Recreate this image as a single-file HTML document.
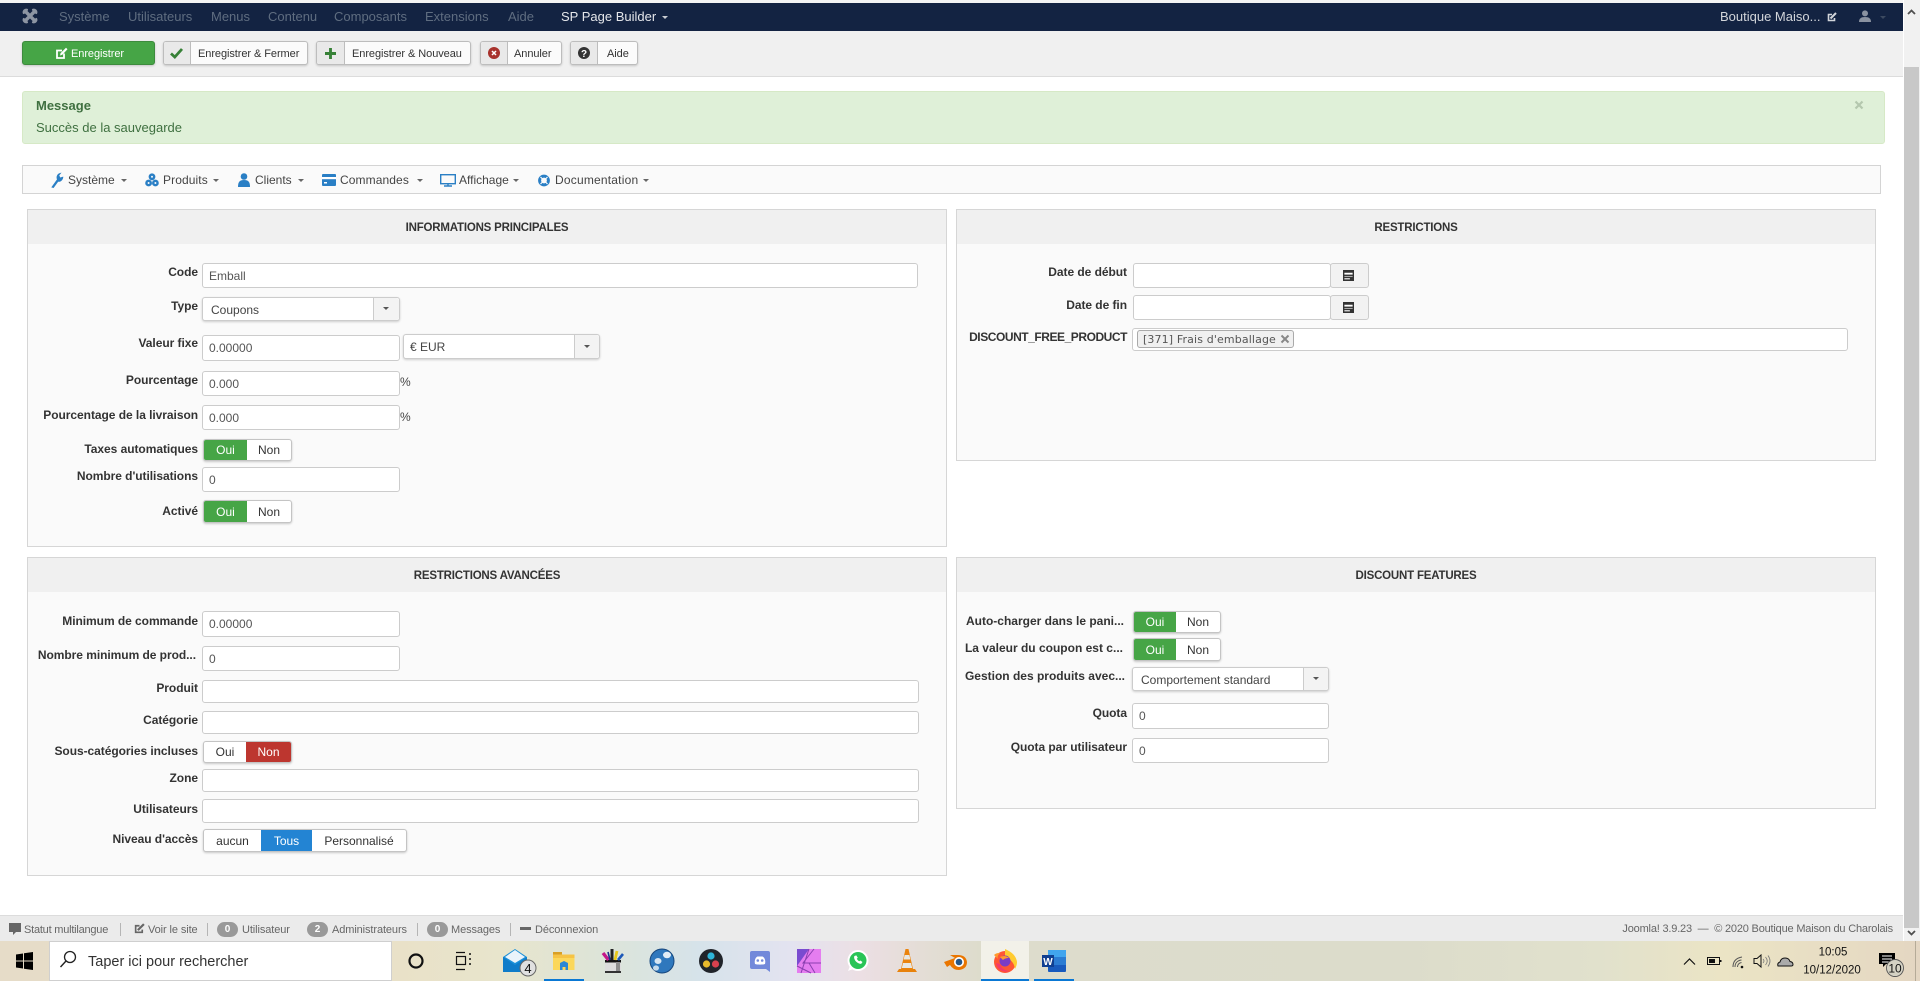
<!DOCTYPE html>
<html lang="fr"><head><meta charset="utf-8"><title>Joomla</title>
<style>
html,body{margin:0;padding:0;width:1920px;height:981px;overflow:hidden;background:#fff;font-family:"Liberation Sans",Arial,sans-serif;color:#333}
.a,.t,.lb,.in,.pn,.bt,.tg{position:absolute;box-sizing:border-box}
.t{white-space:nowrap;line-height:14px;height:14px}
.nv{font-size:13px;color:#5f6d80;top:10px}
.lb{font-weight:bold;font-size:12px;line-height:14px;white-space:nowrap;text-align:right;color:#333;letter-spacing:-.05px}
.in{background:#fff;border:1px solid #ccc;border-radius:3px;font-size:12px;color:#555;padding-left:6px;display:flex;align-items:center}
.sel{box-shadow:0 1px 2px rgba(0,0,0,.18);color:#444}
.ar{position:absolute;right:0;top:0;bottom:0;background:#f3f3f3;border-left:1px solid #ccc;border-radius:0 3px 3px 0}
.ar:after{content:"";position:absolute;left:50%;top:50%;margin:-2px 0 0 -3.5px;border:3.5px solid transparent;border-top-color:#555;border-bottom:0}
.pn{border:1px solid #d6d6d6;background:#fafafa}
.ph{position:absolute;left:0;right:0;top:0;height:34px;background:#f0f0f0;text-align:center;font-weight:bold;font-size:11.5px;letter-spacing:-.2px;line-height:37px;color:#333}
.bt{background:#fbfbfb;border:1px solid #bdbdbd;border-radius:3px;box-shadow:0 1px 2px rgba(0,0,0,.18);height:24px;top:41px}
.bic{position:absolute;left:0;top:0;bottom:0;background:#e9e9e9;border-right:1px solid #bdbdbd;border-radius:2px 0 0 2px}
.bt span{position:absolute;top:5px;font-size:11px;line-height:14px;color:#333;white-space:nowrap;letter-spacing:-.07px}
.tg{border:1px solid #c4c4c4;border-radius:3px;background:#fff;box-shadow:0 1px 2px rgba(0,0,0,.2);font-size:12px;color:#333;overflow:hidden}
.tg b{position:absolute;top:0;bottom:0;font-weight:normal;text-align:center;display:flex;align-items:center;justify-content:center}
.g{background:#46a546;color:#fff}.r{background:#bd362f;color:#fff}.bl{background:#2384d3;color:#fff}
.m{font-size:12px;color:#444;top:172.5px}
.c{position:absolute;top:179px;border:3px solid transparent;border-top-color:#666;border-bottom:0}
.f{font-size:11px;color:#666;top:923px;letter-spacing:-.1px}
.d{position:absolute;top:923px;width:1px;height:13px;background:#b5b5b5}
.bd{position:absolute;top:922px;width:21px;height:15px;border-radius:8px;background:#999;color:#fff;font-size:10px;font-weight:bold;line-height:15px;text-align:center}
svg{position:absolute;overflow:visible}
</style></head><body>

<!-- navbar -->
<div class="a" style="left:0;top:0;width:1920px;height:3px;background:#f4f4f4"></div>
<div class="a" style="left:0;top:3px;width:1903px;height:28px;background:#132342"></div>
<svg style="left:22px;top:8px" width="16" height="16" viewBox="0 0 16 16"><g fill="none" stroke="#8d95a3" stroke-width="3.4" stroke-linecap="round"><path d="M3 3L13 13M13 3L3 13"/><path d="M5 1.8A2.6 2.6 0 0 0 1.8 5M14.2 5A2.6 2.6 0 0 0 11 1.8M1.8 11A2.6 2.6 0 0 0 5 14.2M11 14.2A2.6 2.6 0 0 0 14.2 11" stroke-width="2.2"/></g></svg>
<div class="t nv" style="left:59px">Système</div>
<div class="t nv" style="left:128px">Utilisateurs</div>
<div class="t nv" style="left:211px">Menus</div>
<div class="t nv" style="left:268px">Contenu</div>
<div class="t nv" style="left:334px">Composants</div>
<div class="t nv" style="left:425px">Extensions</div>
<div class="t nv" style="left:508px">Aide</div>
<div class="t nv" style="left:561px;color:#e4e6ea">SP Page Builder</div>
<div class="a" style="left:662px;top:16px;border:3px solid transparent;border-top-color:#c8ccd2;border-bottom:0"></div>
<div class="t nv" style="left:1720px;color:#d2d5da">Boutique Maiso...</div>
<svg style="left:1827px;top:12px" width="10" height="10" viewBox="0 0 10 10"><path d="M7.5 6v2.5h-6v-6H5" fill="none" stroke="#d2d5da" stroke-width="1.6"/><path d="M3.5 6.5L9 1" stroke="#d2d5da" stroke-width="2"/></svg>
<svg style="left:1859px;top:10px" width="12" height="12" viewBox="0 0 12 12" fill="#8a92a0"><circle cx="6" cy="3.4" r="3"/><path d="M0 12c0-3.5 2-5 6-5s6 1.500 6 5z"/></svg>
<div class="a" style="left:1880px;top:16px;border:3px solid transparent;border-top-color:#3c4a60;border-bottom:0"></div>

<!-- toolbar -->
<div class="a" style="left:0;top:31px;width:1903px;height:46px;background:#f0f0f0;border-bottom:1px solid #dcdcdc;box-sizing:border-box"></div>
<div class="bt" style="left:22px;width:133px;background:#46a546;border-color:#3d8b3d">
<svg style="left:32px;top:5px" width="13" height="13" viewBox="0 0 13 13"><path d="M9 6.500v4.500H2V3.500h5" fill="none" stroke="#fff" stroke-width="1.800"/><path d="M5 8.500l.6-2.400L11 .8l1.500 1.500L7.300 7.800z" fill="#fff"/></svg>
<span style="left:48px;color:#fff">Enregistrer</span></div>
<div class="bt" style="left:163px;width:145px"><div class="bic" style="width:26px"></div>
<svg style="left:6px;top:5px" width="13" height="12" viewBox="0 0 13 12"><path d="M1 6.500L4.800 10 12 2" fill="none" stroke="#378137" stroke-width="2.800"/></svg>
<span style="left:34px">Enregistrer &amp; Fermer</span></div>
<div class="bt" style="left:316px;width:155px"><div class="bic" style="width:27px"></div>
<svg style="left:8px;top:6px" width="11" height="11" viewBox="0 0 13 13"><path d="M6.500 0v13M0 6.500h13" stroke="#378137" stroke-width="3.400"/></svg>
<span style="left:35px">Enregistrer &amp; Nouveau</span></div>
<div class="bt" style="left:480px;width:82px"><div class="bic" style="width:26px"></div>
<svg style="left:7px;top:4px" width="12" height="14" viewBox="0 0 12 14"><circle cx="6" cy="7" r="6" fill="#a8322c"/><path d="M4 5l4 4M8 5l-4 4" stroke="#fff" stroke-width="1.500"/></svg>
<span style="left:33px">Annuler</span></div>
<div class="bt" style="left:570px;width:68px"><div class="bic" style="width:26px"></div>
<svg style="left:7px;top:4px" width="12" height="14" viewBox="0 0 12 14"><circle cx="6" cy="7" r="6" fill="#333"/><text x="6" y="11" font-size="10" font-weight="bold" fill="#fff" text-anchor="middle" font-family="Liberation Sans">?</text></svg>
<span style="left:36px">Aide</span></div>

<!-- message -->
<div class="a" style="left:22px;top:91px;width:1863px;height:53px;background:#dff0d8;border:1px solid #d6e9c6;border-radius:3px;box-sizing:border-box"></div>
<div class="t" style="left:36px;top:99px;font-size:13px;font-weight:bold;color:#3f7040">Message</div>
<div class="t" style="left:36px;top:121px;font-size:13px;color:#3f7040">Succès de la sauvegarde</div>
<svg style="left:1855px;top:101px" width="8" height="8" viewBox="0 0 8 8"><path d="M.5.500l7 7M7.500.500l-7 7" stroke="#b4c7ae" stroke-width="2.200"/></svg>

<!-- submenu -->
<div class="a" style="left:22px;top:165px;width:1859px;height:29px;background:#fafafa;border:1px solid #d4d4d4;box-sizing:border-box"></div>
<svg style="left:50px;top:172px" width="14" height="16" viewBox="0 0 12 14"><path d="M1 13.500L6 6.500C5 4 6 1 10 .5L8 3l.8 1.800L11.500 4c0 3-2.500 5-4.500 4.500L3 14z" fill="#2a7fc5"/></svg>
<div class="t m" style="left:68px">Système</div><div class="c" style="left:121px"></div>
<svg style="left:145px;top:173px" width="14" height="14" viewBox="0 0 14 14" fill="#2a7fc5"><circle cx="7" cy="3.800" r="3.400"/><circle cx="3.600" cy="10" r="3.400"/><circle cx="10.400" cy="10" r="3.400"/><g fill="#fafafa"><circle cx="7" cy="3.800" r="1"/><circle cx="3.600" cy="10" r="1"/><circle cx="10.400" cy="10" r="1"/></g></svg>
<div class="t m" style="left:163px;letter-spacing:.1px">Produits</div><div class="c" style="left:213px"></div>
<svg style="left:238px;top:173px" width="12" height="14" viewBox="0 0 12 14" fill="#2a7fc5"><circle cx="6" cy="3.500" r="3.300"/><path d="M0 14c0-5 1.500-7 6-7s6 2 6 7z"/></svg>
<div class="t m" style="left:255px">Clients</div><div class="c" style="left:298px"></div>
<svg style="left:322px;top:174px" width="14" height="12" viewBox="0 0 14 12"><rect width="14" height="12" rx="1" fill="#2a7fc5"/><rect y="3" width="14" height="2.200" fill="#fff"/><rect x="2" y="8" width="3" height="1.500" fill="#fff"/></svg>
<div class="t m" style="left:340px;letter-spacing:.1px">Commandes</div><div class="c" style="left:417px"></div>
<svg style="left:440px;top:174px" width="16" height="13" viewBox="0 0 16 13"><rect x=".7" y=".7" width="14.600" height="9" fill="none" stroke="#2a7fc5" stroke-width="1.400"/><path d="M4 12h8M8 10v2" stroke="#2a7fc5" stroke-width="1.400"/></svg>
<div class="t m" style="left:459px">Affichage</div><div class="c" style="left:513px"></div>
<svg style="left:538px;top:174px" width="12" height="13" viewBox="0 0 12 12"><circle cx="6" cy="6" r="4.400" fill="none" stroke="#2a7fc5" stroke-width="3"/><path d="M2.500 2.500L4.500 4.500M9.500 2.500L7.500 4.500M2.500 9.500L4.500 7.500M9.500 9.500L7.500 7.500" stroke="#fafafa" stroke-width="1.200"/></svg>
<div class="t m" style="left:555px;letter-spacing:.2px">Documentation</div><div class="c" style="left:643px"></div>

<!-- panels -->
<div class="pn" style="left:27px;top:209px;width:920px;height:338px"><div class="ph">INFORMATIONS PRINCIPALES</div></div>
<div class="pn" style="left:956px;top:209px;width:920px;height:252px"><div class="ph">RESTRICTIONS</div></div>
<div class="pn" style="left:27px;top:557px;width:920px;height:319px"><div class="ph">RESTRICTIONS AVANCÉES</div></div>
<div class="pn" style="left:956px;top:557px;width:920px;height:252px"><div class="ph">DISCOUNT FEATURES</div></div>

<!-- panel 1 -->
<div class="lb" style="right:1722px;top:265px">Code</div>
<div class="in" style="left:202px;top:263px;width:716px;height:25px">Emball</div>
<div class="lb" style="right:1722px;top:299px">Type</div>
<div class="in sel" style="left:202px;top:297px;width:198px;height:24px;padding-left:8px;padding-top:1px">Coupons<div class="ar" style="width:25px"></div></div>
<div class="lb" style="right:1722px;top:336px">Valeur fixe</div>
<div class="in" style="left:202px;top:335px;width:198px;height:26px">0.00000</div>
<div class="in sel" style="left:403px;top:334px;width:197px;height:25px">€ EUR<div class="ar" style="width:24px"></div></div>
<div class="lb" style="right:1722px;top:373px">Pourcentage</div>
<div class="in" style="left:202px;top:371px;width:198px;height:25px">0.000</div>
<div class="t" style="left:400px;top:375px;font-size:12px;color:#444">%</div>
<div class="lb" style="right:1722px;top:408px">Pourcentage de la livraison</div>
<div class="in" style="left:202px;top:405px;width:198px;height:25px">0.000</div>
<div class="t" style="left:400px;top:410px;font-size:12px;color:#444">%</div>
<div class="lb" style="right:1722px;top:442px">Taxes automatiques</div>
<div class="tg" style="left:203px;top:439px;width:89px;height:22px"><b class="g" style="left:0;width:43px">Oui</b><b style="left:43px;width:44px">Non</b></div>
<div class="lb" style="right:1722px;top:469px">Nombre d'utilisations</div>
<div class="in" style="left:202px;top:467px;width:198px;height:25px">0</div>
<div class="lb" style="right:1722px;top:504px">Activé</div>
<div class="tg" style="left:203px;top:500px;width:89px;height:23px"><b class="g" style="left:0;width:43px">Oui</b><b style="left:43px;width:44px">Non</b></div>

<!-- panel 2 -->
<div class="lb" style="right:793px;top:265px">Date de début</div>
<div class="in" style="left:1133px;top:263px;width:198px;height:25px"></div>
<div class="in" style="left:1330px;top:263px;width:39px;height:25px;background:#f2f2f2"></div>
<div class="lb" style="right:793px;top:298px">Date de fin</div>
<div class="in" style="left:1133px;top:295px;width:198px;height:25px"></div>
<div class="in" style="left:1330px;top:295px;width:39px;height:25px;background:#f2f2f2"></div>
<svg style="left:1343px;top:270px" width="11" height="11" viewBox="0 0 12 12"><rect width="12" height="12" fill="#333"/><rect x="1.500" y="3" width="9" height="2" fill="#fff"/><rect x="1.500" y="6.500" width="9" height="1" fill="#bbb"/><rect x="1.500" y="9" width="6" height="1.200" fill="#fff"/></svg>
<svg style="left:1343px;top:302px" width="11" height="11" viewBox="0 0 12 12"><rect width="12" height="12" fill="#333"/><rect x="1.500" y="3" width="9" height="2" fill="#fff"/><rect x="1.500" y="6.500" width="9" height="1" fill="#bbb"/><rect x="1.500" y="9" width="6" height="1.200" fill="#fff"/></svg>
<div class="lb" style="right:793px;top:330px;letter-spacing:-.45px">DISCOUNT_FREE_PRODUCT</div>
<div class="in" style="left:1132px;top:328px;width:716px;height:23px"></div>
<div class="a" style="left:1137px;top:330px;width:157px;height:18px;background:#f0f0f0;border:1px solid #aaa;border-radius:3px;box-sizing:border-box"></div>
<div class="t" style="left:1143px;top:333px;font-family:'DejaVu Sans',sans-serif;font-size:11px;letter-spacing:.13px;color:#555">[371] Frais d'emballage</div>
<svg style="left:1281px;top:335px" width="8" height="8" viewBox="0 0 8 8"><path d="M.5.500l7 7M7.500.500l-7 7" stroke="#888" stroke-width="2"/></svg>

<!-- panel 3 -->
<div class="lb" style="right:1722px;top:614px">Minimum de commande</div>
<div class="in" style="left:202px;top:611px;width:198px;height:26px">0.00000</div>
<div class="lb" style="right:1724px;top:648px">Nombre minimum de prod...</div>
<div class="in" style="left:202px;top:646px;width:198px;height:25px">0</div>
<div class="lb" style="right:1722px;top:681px">Produit</div>
<div class="in" style="left:202px;top:680px;width:717px;height:23px"></div>
<div class="lb" style="right:1722px;top:713px">Catégorie</div>
<div class="in" style="left:202px;top:711px;width:717px;height:23px"></div>
<div class="lb" style="right:1722px;top:744px">Sous-catégories incluses</div>
<div class="tg" style="left:203px;top:741px;width:89px;height:22px"><b style="left:0;width:42px">Oui</b><b class="r" style="left:42px;width:45px">Non</b></div>
<div class="lb" style="right:1722px;top:771px">Zone</div>
<div class="in" style="left:202px;top:769px;width:717px;height:23px"></div>
<div class="lb" style="right:1722px;top:802px">Utilisateurs</div>
<div class="in" style="left:202px;top:799px;width:717px;height:24px"></div>
<div class="lb" style="right:1722px;top:832px">Niveau d'accès</div>
<div class="tg" style="left:203px;top:829px;width:204px;height:23px"><b style="left:0;width:57px">aucun</b><b class="bl" style="left:57px;width:51px">Tous</b><b style="left:108px;width:94px">Personnalisé</b></div>

<!-- panel 4 -->
<div class="lb" style="right:796px;top:614px;letter-spacing:0">Auto-charger dans le pani...</div>
<div class="tg" style="left:1133px;top:611px;width:88px;height:22px"><b class="g" style="left:0;width:42px">Oui</b><b style="left:42px;width:44px">Non</b></div>
<div class="lb" style="right:797px;top:641px;letter-spacing:0">La valeur du coupon est c...</div>
<div class="tg" style="left:1133px;top:638px;width:88px;height:23px"><b class="g" style="left:0;width:42px">Oui</b><b style="left:42px;width:44px">Non</b></div>
<div class="lb" style="right:795px;top:669px;letter-spacing:0">Gestion des produits avec...</div>
<div class="in sel" style="left:1132px;top:667px;width:197px;height:24px;padding-left:8px;padding-top:1px">Comportement standard<div class="ar" style="width:24px"></div></div>
<div class="lb" style="right:793px;top:706px">Quota</div>
<div class="in" style="left:1132px;top:703px;width:197px;height:26px">0</div>
<div class="lb" style="right:793px;top:740px">Quota par utilisateur</div>
<div class="in" style="left:1132px;top:738px;width:197px;height:25px">0</div>

<!-- scrollbar -->
<div class="a" style="left:1903px;top:0;width:17px;height:941px;background:#f1f1f1;border-left:1px solid #fff;box-sizing:border-box"></div>
<div class="a" style="left:1904px;top:67px;width:15px;height:861px;background:#c8c8c8"></div>
<svg style="left:1907px;top:9px" width="9" height="6" viewBox="0 0 9 6"><path d="M1 5l3.500-3.500L8 5" fill="none" stroke="#505050" stroke-width="1.800"/></svg>
<svg style="left:1907px;top:930px" width="9" height="6" viewBox="0 0 9 6"><path d="M1 1l3.500 3.500L8 1" fill="none" stroke="#505050" stroke-width="1.800"/></svg>

<!-- status bar -->
<div class="a" style="left:0;top:915px;width:1903px;height:26px;background:#ebebeb;border-top:1px solid #dcdcdc;box-sizing:border-box"></div>
<svg style="left:9px;top:923px" width="12" height="12" viewBox="0 0 12 12"><path d="M0 0h12v9H7l-3 3V9H0z" fill="#666"/></svg>
<div class="t f" style="left:24px;letter-spacing:-.22px">Statut multilangue</div><div class="d" style="left:120px"></div>
<svg style="left:134px;top:923px" width="11" height="11" viewBox="0 0 10 10"><path d="M7.500 6v2.500h-6v-6H5" fill="none" stroke="#666" stroke-width="1.500"/><path d="M3.500 6.500L9 1" stroke="#666" stroke-width="2"/></svg>
<div class="t f" style="left:148px">Voir le site</div><div class="d" style="left:207px"></div>
<div class="bd" style="left:217px">0</div><div class="t f" style="left:242px">Utilisateur</div>
<div class="bd" style="left:307px">2</div><div class="t f" style="left:332px">Administrateurs</div><div class="d" style="left:417px"></div>
<div class="bd" style="left:427px">0</div><div class="t f" style="left:451px">Messages</div><div class="d" style="left:510px"></div>
<div class="a" style="left:520px;top:927px;width:11px;height:3px;background:#666"></div>
<div class="t f" style="left:535px">Déconnexion</div>
<div class="t f" style="right:27px;top:921.5px;font-size:11px;letter-spacing:-.19px">Joomla! 3.9.23 &nbsp;— &nbsp;© 2020 Boutique Maison du Charolais</div>

<!-- taskbar -->
<div class="a" style="left:0;top:941px;width:1920px;height:40px;background:linear-gradient(90deg,#e6dcc8 0,#e9e1c8 400px,#e8e5cc 500px,#dde4d8 600px,#d6e3ea 700px,#e3e3f0 790px,#ecdfe4 860px,#e4ddd6 920px,#dddccc 980px,#dcdccb 1400px,#e1e1cc 1600px,#ebe4c5 1720px,#e7dcc3 1850px,#e4d6c2 1920px)"></div>
<div class="a" style="left:49px;top:941px;width:343px;height:40px;background:#fff;border:1px solid #cfcfcf;box-sizing:border-box"></div>
<div class="t" style="left:88px;top:954px;height:17px;line-height:17px;font-size:14.5px;color:#333">Taper ici pour rechercher</div>
<div class="a" style="left:981px;top:941px;width:48px;height:40px;background:#f2f1e9"></div>
<div class="a" style="left:544px;top:979px;width:40px;height:2px;background:#0a78d4"></div>
<div class="a" style="left:981px;top:979px;width:48px;height:2px;background:#0a78d4"></div>
<div class="a" style="left:1034px;top:979px;width:40px;height:2px;background:#0a78d4"></div>
<div class="a" style="left:1915px;top:941px;width:1px;height:40px;background:#b5ab98"></div>

<svg style="left:0;top:941px" width="1920" height="40" viewBox="0 941 1920 40" font-family="Liberation Sans">
<!-- start -->
<path d="M16 954.500l7-1v7h-7zM24 953.300l9-1.300v8.500h-9zM16 961.500h7v7l-7-1zM24 961.500h9v8.500l-9-1.300z" fill="#000"/>
<!-- search -->
<circle cx="70" cy="957" r="5.500" fill="none" stroke="#222" stroke-width="1.300"/><path d="M66 961l-5.500 6" stroke="#222" stroke-width="1.400"/>
<!-- cortana -->
<circle cx="416" cy="961" r="6.500" fill="none" stroke="#111" stroke-width="2.200"/>
<!-- task view -->
<path d="M456 952.500h9M456 969.500h9" stroke="#111" stroke-width="1.200"/><rect x="456.500" y="956.500" width="9" height="8" fill="none" stroke="#111" stroke-width="1.200"/><path d="M470 953v2M470 958v2M470 963v2" stroke="#111" stroke-width="1.500"/>
<!-- mail -->
<path d="M503 957l12-8 12 8v15h-24z" fill="#1a8fd8"/><path d="M505 957l10-7 10 7-10 6z" fill="#eaf4fb"/><path d="M503 957l12 8 12-8v15h-24z" fill="#0f7cc9"/>
<circle cx="528" cy="968" r="8" fill="#e0e0e0" stroke="#666" stroke-width="1"/><text x="528" y="973" font-size="13" text-anchor="middle" fill="#111">4</text>
<!-- folder -->
<path d="M553 952.500h7l2 2h12.500V970H553z" fill="#f6c344"/><rect x="553" y="952" width="9" height="2.500" fill="#d99f25"/><path d="M553 958h21.500v12H553z" fill="#fbd75b"/><path d="M560 970v-7l4-2 4 2v7h-2.500v-3h-3v3z" fill="#2a87d4"/>
<!-- paint -->
<path d="M605 960h16v13h-16z" fill="#dcdcdc"/><rect x="605" y="960" width="16" height="2.500" fill="#111"/><rect x="605" y="971" width="16" height="2" fill="#333"/><rect x="616" y="962" width="4" height="9" fill="#8d8d8d"/><path d="M608.500 960l-5.500-7" stroke="#c3178a" stroke-width="3.400"/><path d="M612 960l0-11" stroke="#222" stroke-width="3"/><path d="M615 960l2-9" stroke="#e8c91a" stroke-width="2.800"/><path d="M618 960l5-6" stroke="#1c58b8" stroke-width="2.600"/><path d="M610 960l-2-8" stroke="#1e2f8c" stroke-width="1.600"/>
<!-- ball -->
<circle cx="662" cy="961" r="12" fill="#2f78bd"/><circle cx="662" cy="961" r="12" fill="none" stroke="#17477d" stroke-width="1"/><ellipse cx="667" cy="955" rx="4" ry="3.200" fill="#e2edf6"/><ellipse cx="658" cy="961" rx="3.500" ry="3" fill="#d7e6f2"/><ellipse cx="656" cy="968" rx="3" ry="2.600" fill="#c6dbec"/>
<!-- resolve -->
<circle cx="711" cy="961" r="12" fill="#20242a"/><circle cx="711" cy="956" r="3.600" fill="#2eb4d8"/><circle cx="706.500" cy="964" r="3.600" fill="#e8b92b"/><circle cx="715.500" cy="964" r="3.600" fill="#d8414e"/>
<!-- discord -->
<path d="M750 953q0-2 2-2h16q2 0 2 2v19l-4-3h-14q-2 0-2-2z" fill="#7289da"/><path d="M755 964c-1-4 1-7 2.500-7.500h5c1.500.5 3.500 3.500 2.500 7.500-2 .8-8 .8-10 0z" fill="#fff"/><circle cx="757.800" cy="960.500" r="1.300" fill="#7289da"/><circle cx="762.200" cy="960.500" r="1.300" fill="#7289da"/>
<!-- affinity -->
<rect x="797" y="949" width="24" height="24" fill="#e57df0"/><path d="M797 949h12l-12 17z" fill="#7a4bd0"/><path d="M801 973l8-24M814 949l-11 14h18M797 966l14 7M815 973l-6-10" stroke="#8a3fb0" stroke-width="1" fill="none"/>
<!-- whatsapp -->
<circle cx="858" cy="960.500" r="10.500" fill="#fff"/><circle cx="858" cy="960.500" r="8.500" fill="#29c456"/><path d="M848 971l2-5 3 3z" fill="#fff"/><path d="M854.500 956c-1 1 0 4 1.500 5.500s4.500 3 5.500 2l1-1.500-2.200-1.500-1 .8c-1-.4-2-1.400-2.500-2.500l1-1-1.500-2.400z" fill="#fff"/>
<!-- vlc -->
<path d="M897 972l2-3h16l2 3z" fill="#e8820c"/><path d="M901 969l4.500-20h3l4.500 20z" fill="#ea840e"/><path d="M904.600 955h4.800l.9 4.500h-6.600z" fill="#e8e8e4"/><path d="M903 963h8l1.200 5h-10.400z" fill="#e8e8e4"/>
<!-- blender -->
<path d="M944 962l11-4-5-3h8q8 0 9 7 0 7-8 8-6 0-9-5l-3 2z" fill="#ea7600"/><circle cx="959" cy="962" r="5" fill="#fff"/><circle cx="959" cy="962" r="3.300" fill="#265787"/>
<!-- firefox -->
<circle cx="1005" cy="962" r="11" fill="#ff5634"/><path d="M1005 949c4 2 11 5 12 13 0 3-1 5-2 7-1-8-6-10-10-12z" fill="#ffcb30"/><path d="M994 955c2-2 4-2 6-2-2 2-3 4-2 6z" fill="#ff9a2e"/><circle cx="1005" cy="961" r="5.500" fill="#7b3cc5"/><path d="M996 963c1 7 8 10 14 8-5 0-9-3-10-7z" fill="#f33a6a"/><path d="M1000 957c2-1 6-2 9 1-3 0-5 1-6 2z" fill="#ff9a2e"/>
<!-- word -->
<rect x="1048" y="950" width="18" height="22" rx="1" fill="#185abd"/><rect x="1048" y="950" width="18" height="7" fill="#41a5ee"/><rect x="1048" y="957" width="18" height="8" fill="#2b7cd3"/><rect x="1042" y="955" width="12" height="12" fill="#103f91"/><text x="1048" y="965" font-size="10" font-weight="bold" fill="#fff" text-anchor="middle">W</text>
<!-- tray -->
<path d="M1684 964.500l5.500-5.500 5.500 5.500" fill="none" stroke="#111" stroke-width="1.200"/>
<rect x="1707.500" y="957.500" width="12" height="7" fill="none" stroke="#111"/><rect x="1709" y="959" width="6" height="4" fill="#111"/><rect x="1720" y="960" width="1.500" height="2" fill="#111"/>
<path d="M1733 967c0-6 3-9 9-10M1735 967c0-4 2.500-6.500 6.500-7M1737.500 967c0-2.500 1.500-4 4-4.500" fill="none" stroke="#555" stroke-width="1"/><circle cx="1742" cy="967" r="1.300" fill="#111"/>
<path d="M1754 958.500h3l4-3.500v12l-4-3.500h-3z" fill="none" stroke="#111"/><path d="M1763 959q2 2 0 4M1765.500 957q3.500 4 0 8M1768 955.500q4 5.500 0 11" fill="none" stroke="#777" stroke-width=".8"/>
<path d="M1778 966q-1-3 2-4 1-4 5-4t5 3.500q3 .5 3 3 0 1.500-2 1.500z" fill="#aaa" stroke="#111"/>
<text x="1833" y="955.500" font-size="11.500" text-anchor="middle" fill="#111">10:05</text>
<text x="1832" y="973.500" font-size="11.500" text-anchor="middle" fill="#111">10/12/2020</text>
<path d="M1879 953h16v11h-9l-3 3v-3h-4z" fill="#000"/><path d="M1882 956h10M1882 959h10M1882 962h7" stroke="#fff" stroke-width="1"/>
<circle cx="1895" cy="968" r="8.500" fill="#d5d2c4" stroke="#555" stroke-width=".9"/><text x="1895" y="972.500" font-size="12" text-anchor="middle" fill="#111">10</text>
</svg>
</body></html>
